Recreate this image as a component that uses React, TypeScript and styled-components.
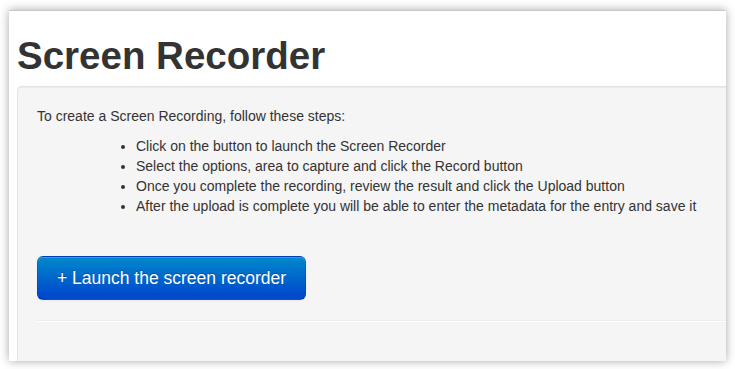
import styled, { createGlobalStyle } from 'styled-components';

const GlobalStyle = createGlobalStyle`
  html, body {
    margin: 0;
    padding: 0;
    background: #ffffff;
  }
  body {
    font-family: "Liberation Sans", Arial, Helvetica, sans-serif;
    font-size: 14px;
    line-height: 20px;
    color: #333333;
  }
`;

const Page = styled.div`
  padding: 10px 9px 8px;
`;

const Window = styled.div`
  height: 351px;
  overflow: hidden;
  background: #ffffff;
  border-top: 1px solid #c8c8c8;
  box-sizing: border-box;
  box-shadow: 0 0 9px rgba(0, 0, 0, 0.35);
  padding: 15px 0 0 8px;
`;

const Title = styled.h1`
  margin: 10px 0;
  font-size: 38.5px;
  line-height: 40px;
  font-weight: bold;
  color: #333333;
`;

const Well = styled.div`
  margin-right: -40px;
  min-height: 300px;
  padding: 19px;
  background-color: #f5f5f5;
  border: 1px solid #e3e3e3;
  border-radius: 4px;
  box-shadow: inset 0 1px 1px rgba(0, 0, 0, 0.05);
`;

const Intro = styled.p`
  margin: 0 0 10px;
`;

const Steps = styled.ul`
  margin: 0 0 40px 99px;
  padding: 0;
  list-style: disc;

  li {
    line-height: 20px;
  }
`;

const LaunchButton = styled.button`
  display: inline-block;
  padding: 11px 19px;
  font-family: inherit;
  font-size: 17.5px;
  line-height: 20px;
  color: #ffffff;
  text-shadow: 0 -1px 0 rgba(0, 0, 0, 0.25);
  background-image: linear-gradient(to bottom, #0088cc, #0044cc);
  border: 1px solid rgba(0, 0, 0, 0.1);
  border-bottom-color: rgba(0, 0, 0, 0.25);
  border-radius: 6px;
  box-shadow: inset 0 1px 0 rgba(255, 255, 255, 0.2), 0 1px 2px rgba(0, 0, 0, 0.05);
  cursor: pointer;
`;

const Divider = styled.hr`
  margin: 20px 0;
  border: 0;
  border-top: 1px solid #eeeeee;
  border-bottom: 1px solid #ffffff;
`;

const steps = [
  'Click on the button to launch the Screen Recorder',
  'Select the options, area to capture and click the Record button',
  'Once you complete the recording, review the result and click the Upload button',
  'After the upload is complete you will be able to enter the metadata for the entry and save it',
];

export default function App() {
  return (
    <>
      <GlobalStyle />
      <Page>
        <Window>
          <Title>Screen Recorder</Title>
          <Well>
            <Intro>To create a Screen Recording, follow these steps:</Intro>
            <Steps>
              {steps.map((step, index) => (
                <li key={index}>{step}</li>
              ))}
            </Steps>
            <LaunchButton>+ Launch the screen recorder</LaunchButton>
            <Divider />
          </Well>
        </Window>
      </Page>
    </>
  );
}
